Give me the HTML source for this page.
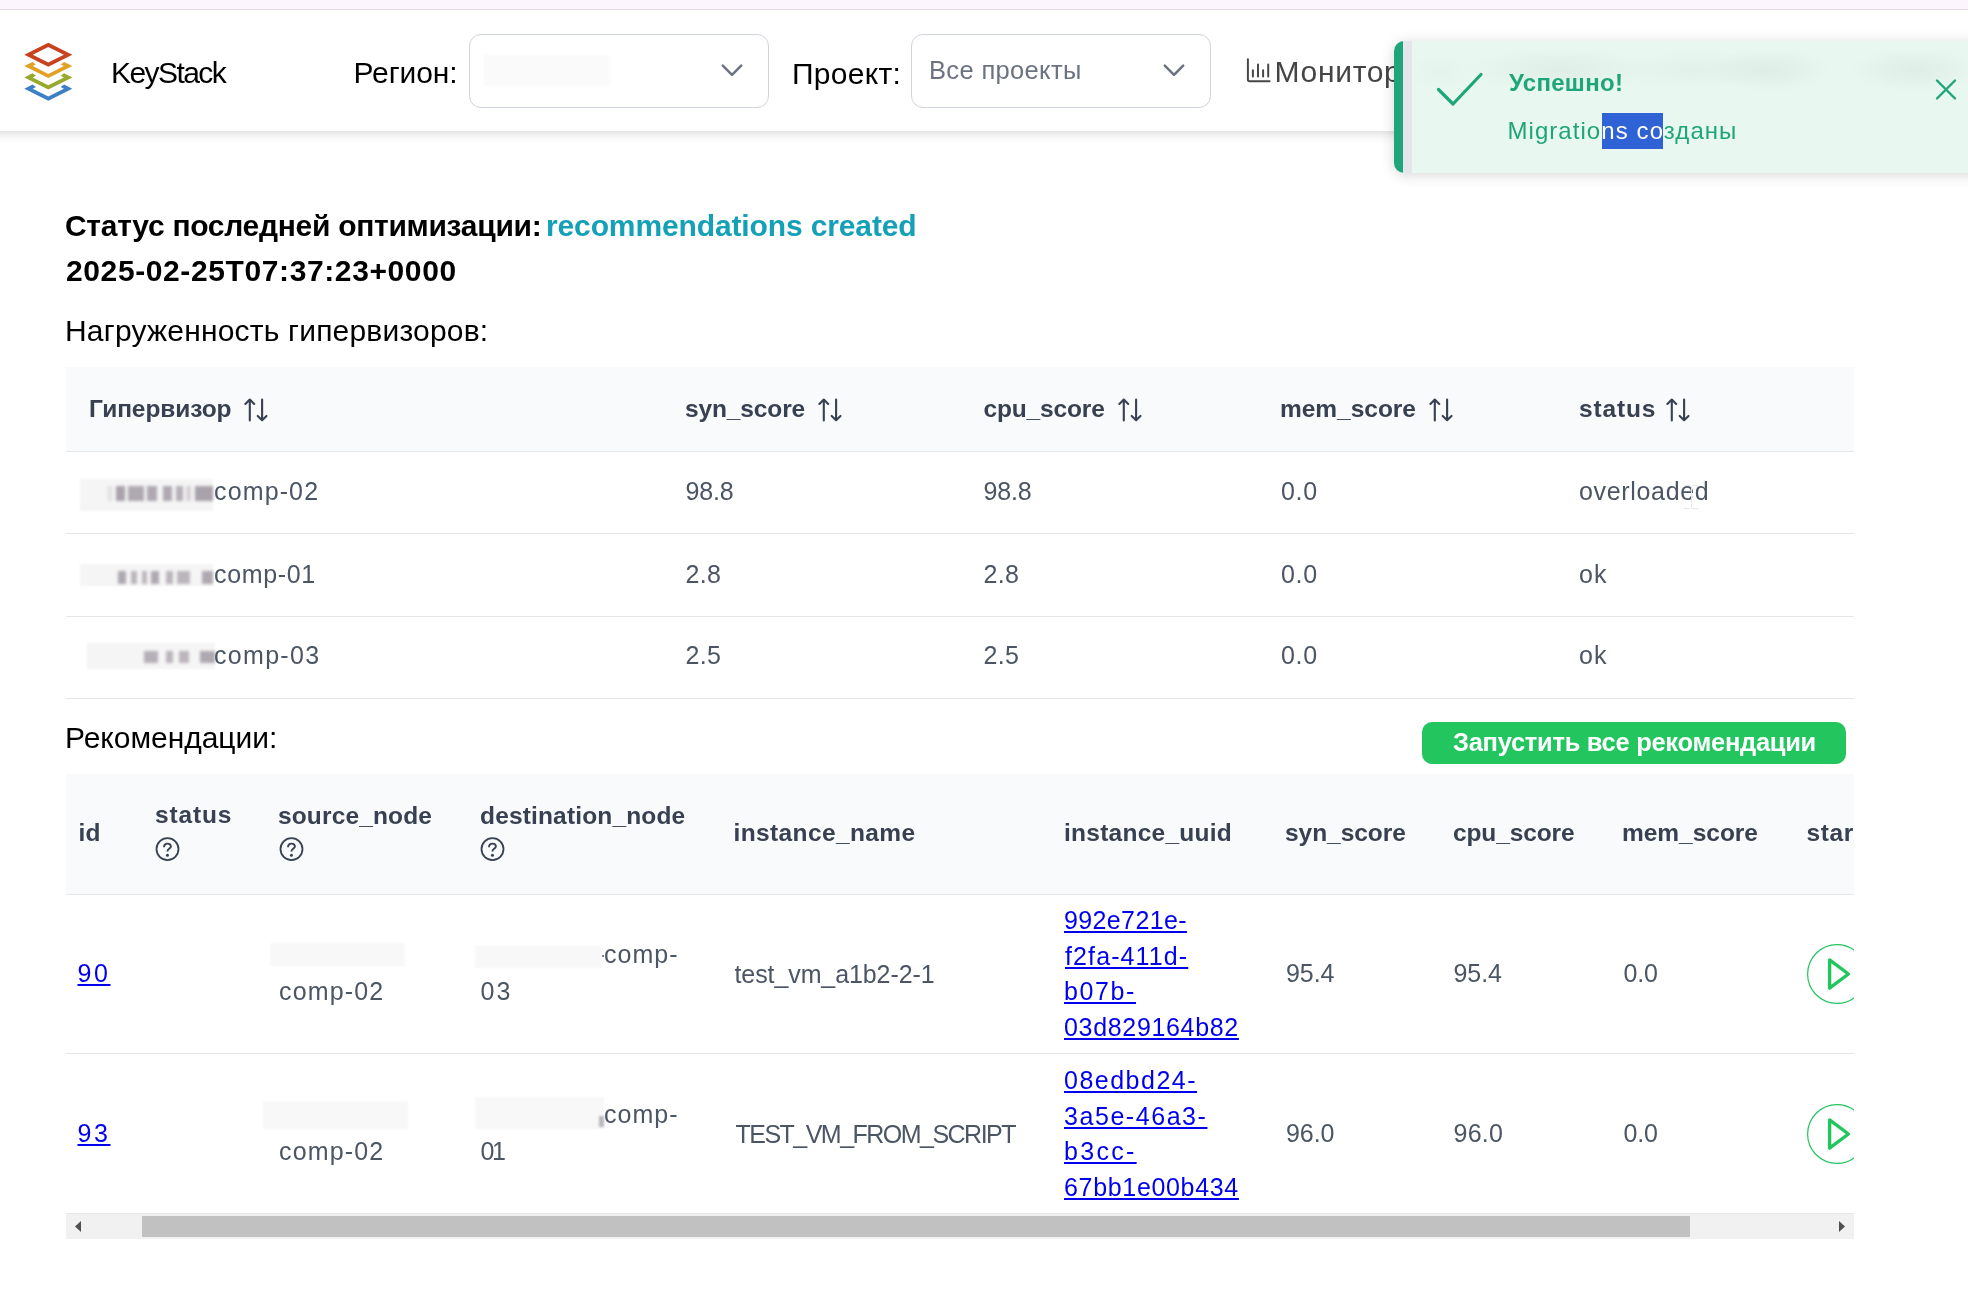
<!DOCTYPE html>
<html><head><meta charset="utf-8"><style>
html,body{margin:0;padding:0;background:#fff;width:1968px;height:1295px;overflow:hidden;}
body{font-family:"Liberation Sans",sans-serif;position:relative;}
.abs{position:absolute;}
.t{position:absolute;white-space:nowrap;line-height:1;}
.u{text-decoration:underline;text-decoration-thickness:2px;text-underline-offset:2.4px;}
.blur{background:#f8f8f8;filter:blur(1px);}
.blur1{background:#f5f5f5;filter:blur(0.8px);}
</style></head><body>
<div class="abs" style="left:0;top:0;width:1968px;height:1295px;overflow:hidden;background:#fff;will-change:transform;">
<div class="abs" style="left:0;top:0;width:1968px;height:9px;background:#fdf5fd;"></div>
<div class="abs" style="left:0;top:9px;width:1968px;height:1px;background:#e3dbe7;"></div>
<div class="abs" style="left:0;top:131px;width:1968px;height:13px;background:linear-gradient(rgba(0,0,0,0.10),rgba(0,0,0,0.05) 35%,rgba(0,0,0,0.015) 70%,rgba(0,0,0,0));"></div>
<svg class="abs" style="left:0;top:0" width="100" height="110" viewBox="0 0 100 110"><path d="M24.30,54.70 48.30,42.70 72.30,54.70 48.30,66.70Z M32.70,54.70 48.30,46.90 63.90,54.70 48.30,62.50Z" fill="#c9411e" fill-rule="evenodd"/><path d="M24.30,66.10 32.50,62.00 35.90,64.50 32.70,66.10 48.30,73.90 63.90,66.10 60.70,64.50 64.10,62.00 72.30,66.10 48.30,78.10Z" fill="#e2a024"/><path d="M24.30,77.40 32.50,73.30 35.90,75.80 32.70,77.40 48.30,85.20 63.90,77.40 60.70,75.80 64.10,73.30 72.30,77.40 48.30,89.40Z" fill="#98a92b"/><path d="M24.30,88.70 32.50,84.60 35.90,87.10 32.70,88.70 48.30,96.50 63.90,88.70 60.70,87.10 64.10,84.60 72.30,88.70 48.30,100.70Z" fill="#3c7fc5"/></svg>
<span id="ks" class="t" style="left:111.0px;top:58.00px;font-size:30px;font-weight:400;color:#000;letter-spacing:-1.571px;">KeyStack</span>
<span id="reg" class="t" style="left:353.5px;top:57.60px;font-size:30px;font-weight:400;color:#000;letter-spacing:-0.100px;">Регион:</span>
<div class="abs" style="left:469px;top:34px;width:298px;height:72px;border:1px solid #cfd4dc;border-radius:12px;background:#fff;"></div>
<div class="abs blur" style="left:484px;top:55px;width:126px;height:31px;background:#fafafa;"></div>
<svg class="abs" style="left:720px;top:62px" width="24" height="18" viewBox="0 0 24 18"><path d="M2.8 3.6 L12 12.8 L21.2 3.6" fill="none" stroke="#6b7280" stroke-width="2.5" stroke-linecap="round" stroke-linejoin="round"/></svg>
<span id="prj" class="t" style="left:792.0px;top:58.50px;font-size:30px;font-weight:400;color:#000;letter-spacing:0.267px;">Проект:</span>
<div class="abs" style="left:911px;top:34px;width:298px;height:72px;border:1px solid #cfd4dc;border-radius:12px;background:#fff;"></div>
<span id="allp" class="t" style="left:929.0px;top:57.53px;font-size:25.5px;font-weight:400;color:#6b7280;letter-spacing:0.340px;">Все проекты</span>
<svg class="abs" style="left:1162px;top:62px" width="24" height="18" viewBox="0 0 24 18"><path d="M2.8 3.6 L12 12.8 L21.2 3.6" fill="none" stroke="#6b7280" stroke-width="2.5" stroke-linecap="round" stroke-linejoin="round"/></svg>
<svg class="abs" style="left:1240px;top:52px" width="40" height="36" viewBox="0 0 40 36" fill="none" stroke="#474747" stroke-width="2" stroke-linecap="round"><path d="M7.9 7.3 V27.6 Q7.9 29.3 9.6 29.3 H29.6" stroke-linejoin="round"/><path d="M12.9 18.3 V24.4 M18 12.5 V24.4 M23.1 18.3 V24.4 M28.2 12.5 V24.4"/></svg>
<span id="mon" class="t" style="left:1274.5px;top:56.60px;font-size:30px;font-weight:400;color:#444444;letter-spacing:0.700px;">Мониторинг</span>
<!-- toast -->
<div class="abs" style="left:1394px;top:41px;width:600px;height:132px;border-radius:10px 0 0 10px;background:#e8f7f0;box-shadow:0 2px 14px rgba(0,0,0,0.16);overflow:hidden;">
  <div class="abs" style="left:0;top:0;width:9px;height:132px;background:#1fa57a;"></div>
  <div class="abs" style="left:9px;top:0;width:9px;height:132px;background:#e4e6ea;"></div>
  <div class="abs" style="left:0;top:0;width:600px;height:132px;background:radial-gradient(ellipse 32px 18px at 46px 31px, rgba(60,100,80,0.025), rgba(60,100,80,0)),radial-gradient(ellipse 95px 22px at 166px 29px, rgba(60,100,80,0.055), rgba(60,100,80,0)),radial-gradient(ellipse 80px 20px at 300px 29px, rgba(60,100,80,0.035), rgba(60,100,80,0)),radial-gradient(ellipse 60px 22px at 376px 29px, rgba(60,100,80,0.06), rgba(60,100,80,0)),radial-gradient(ellipse 65px 22px at 521px 29px, rgba(60,100,80,0.06), rgba(60,100,80,0));"></div>
</div>
<svg class="abs" style="left:1434px;top:70px" width="52" height="40" viewBox="0 0 52 40" fill="none" stroke="#1fa57a" stroke-width="3.2" stroke-linecap="round" stroke-linejoin="round"><path d="M4.5 19.5 L19 34 L47 4.5"/></svg>
<svg class="abs" style="left:1934px;top:78px" width="24" height="23" viewBox="0 0 24 23" fill="none" stroke="#1fa57a" stroke-width="2.4" stroke-linecap="round"><path d="M3 2.5 L21 20.5 M21 2.5 L3 20.5"/></svg>
<span id="ok1" class="t" style="left:1509.0px;top:70.60px;font-size:24px;font-weight:700;color:#1fa57a;letter-spacing:0.314px;">Успешно!</span>
<span id="ok2" class="t" style="left:1507.5px;top:118.80px;font-size:24px;font-weight:400;color:#1fa57a;letter-spacing:1.047px;">Migrations созданы</span>
<div class="abs" style="left:1602px;top:113px;width:61px;height:35.8px;background:#2f62d4;overflow:hidden;"><div class="abs" style="left:-1602px;top:-113px;width:1968px;height:300px;"><span  class="t" style="left:1507.5px;top:118.80px;font-size:24px;font-weight:400;color:#ffffff;letter-spacing:1.047px;">Migrations созданы</span></div></div>
<!-- content -->
<span id="st1" class="t" style="left:65.0px;top:211.30px;font-size:30px;font-weight:700;color:#000;letter-spacing:-0.293px;">Статус последней оптимизации:</span>
<span id="st2" class="t" style="left:546.0px;top:211.30px;font-size:30px;font-weight:700;color:#14a0b6;letter-spacing:-0.127px;">recommendations created</span>
<span id="dt" class="t" style="left:66.0px;top:256.10px;font-size:30px;font-weight:700;color:#000;letter-spacing:0.609px;">2025-02-25T07:37:23+0000</span>
<span id="load" class="t" style="left:65.0px;top:315.80px;font-size:30px;font-weight:400;color:#000;letter-spacing:0.200px;">Нагруженность гипервизоров:</span>
<!-- table1 -->
<div class="abs" style="left:66px;top:367px;width:1788px;height:84px;background:#f9fafb;"></div>
<div class="abs" style="left:66px;top:451px;width:1788px;height:1px;background:#e5e7eb;"></div>
<div class="abs" style="left:66px;top:533px;width:1788px;height:1px;background:#e5e7eb;"></div>
<div class="abs" style="left:66px;top:616px;width:1788px;height:1px;background:#e5e7eb;"></div>
<div class="abs" style="left:66px;top:698px;width:1788px;height:1px;background:#e5e7eb;"></div>
<span id="h1" class="t" style="left:89.0px;top:396.98px;font-size:24.5px;font-weight:700;color:#374151;letter-spacing:-0.089px;">Гипервизор</span><span id="h2" class="t" style="left:685.0px;top:396.98px;font-size:24.5px;font-weight:700;color:#374151;letter-spacing:-0.125px;">syn_score</span><span id="h3" class="t" style="left:983.5px;top:396.98px;font-size:24.5px;font-weight:700;color:#374151;letter-spacing:-0.150px;">cpu_score</span><span id="h4" class="t" style="left:1280.0px;top:396.98px;font-size:24.5px;font-weight:700;color:#374151;letter-spacing:-0.025px;">mem_score</span><span id="h5" class="t" style="left:1579.0px;top:396.98px;font-size:24.5px;font-weight:700;color:#374151;letter-spacing:0.840px;">status</span>
<svg class="abs" style="left:244px;top:398px" width="24" height="24" viewBox="0 0 24 24" fill="none" stroke="#374151" stroke-width="2.1" stroke-linecap="round" stroke-linejoin="round"><path d="M5.8 22.4V1.5 M1.4 5.9 L5.8 1.5 L10.2 5.9"/><path d="M18.1 1.5V22.3 M13.7 17.9 L18.1 22.3 L22.5 17.9"/></svg><svg class="abs" style="left:817.5px;top:398px" width="24" height="24" viewBox="0 0 24 24" fill="none" stroke="#374151" stroke-width="2.1" stroke-linecap="round" stroke-linejoin="round"><path d="M5.8 22.4V1.5 M1.4 5.9 L5.8 1.5 L10.2 5.9"/><path d="M18.1 1.5V22.3 M13.7 17.9 L18.1 22.3 L22.5 17.9"/></svg><svg class="abs" style="left:1117.5px;top:398px" width="24" height="24" viewBox="0 0 24 24" fill="none" stroke="#374151" stroke-width="2.1" stroke-linecap="round" stroke-linejoin="round"><path d="M5.8 22.4V1.5 M1.4 5.9 L5.8 1.5 L10.2 5.9"/><path d="M18.1 1.5V22.3 M13.7 17.9 L18.1 22.3 L22.5 17.9"/></svg><svg class="abs" style="left:1428.5px;top:398px" width="24" height="24" viewBox="0 0 24 24" fill="none" stroke="#374151" stroke-width="2.1" stroke-linecap="round" stroke-linejoin="round"><path d="M5.8 22.4V1.5 M1.4 5.9 L5.8 1.5 L10.2 5.9"/><path d="M18.1 1.5V22.3 M13.7 17.9 L18.1 22.3 L22.5 17.9"/></svg><svg class="abs" style="left:1666px;top:398px" width="24" height="24" viewBox="0 0 24 24" fill="none" stroke="#374151" stroke-width="2.1" stroke-linecap="round" stroke-linejoin="round"><path d="M5.8 22.4V1.5 M1.4 5.9 L5.8 1.5 L10.2 5.9"/><path d="M18.1 1.5V22.3 M13.7 17.9 L18.1 22.3 L22.5 17.9"/></svg>
<div class="abs blur1" style="left:80px;top:479px;width:133px;height:32px;"></div><div class="abs blur1" style="left:80px;top:564px;width:133px;height:22px;"></div><div class="abs blur1" style="left:87px;top:643px;width:128px;height:26px;"></div>
<div class="abs" style="left:108px;top:486px;width:4px;height:15px;background:rgba(85,72,90,0.120);filter:blur(1.8px);"></div><div class="abs" style="left:116px;top:486px;width:8.5px;height:15px;background:rgba(85,72,90,0.480);filter:blur(1.8px);"></div><div class="abs" style="left:128.4px;top:486px;width:15.199999999999989px;height:15px;background:rgba(85,72,90,0.440);filter:blur(1.8px);"></div><div class="abs" style="left:147.4px;top:486px;width:9.900000000000006px;height:15px;background:rgba(85,72,90,0.440);filter:blur(1.8px);"></div><div class="abs" style="left:163.4px;top:486px;width:8.400000000000006px;height:15px;background:rgba(85,72,90,0.440);filter:blur(1.8px);"></div><div class="abs" style="left:176.4px;top:486px;width:6.799999999999983px;height:15px;background:rgba(85,72,90,0.400);filter:blur(1.8px);"></div><div class="abs" style="left:186.3px;top:486px;width:4.599999999999994px;height:15px;background:rgba(85,72,90,0.200);filter:blur(1.8px);"></div><div class="abs" style="left:195.4px;top:486px;width:17.599999999999994px;height:15px;background:rgba(85,72,90,0.480);filter:blur(1.8px);"></div>
<div class="abs" style="left:117.7px;top:571px;width:8.0px;height:13px;background:rgba(85,72,90,0.440);filter:blur(1.8px);"></div><div class="abs" style="left:131.2px;top:571px;width:6.0px;height:13px;background:rgba(85,72,90,0.360);filter:blur(1.8px);"></div><div class="abs" style="left:142.3px;top:571px;width:5.0px;height:13px;background:rgba(85,72,90,0.360);filter:blur(1.8px);"></div><div class="abs" style="left:151.3px;top:571px;width:8.0px;height:13px;background:rgba(85,72,90,0.440);filter:blur(1.8px);"></div><div class="abs" style="left:165.9px;top:571px;width:7.0px;height:13px;background:rgba(85,72,90,0.360);filter:blur(1.8px);"></div><div class="abs" style="left:177.4px;top:571px;width:13.099999999999994px;height:13px;background:rgba(85,72,90,0.360);filter:blur(1.8px);"></div><div class="abs" style="left:201.5px;top:571px;width:11.5px;height:13px;background:rgba(85,72,90,0.440);filter:blur(1.8px);"></div>
<div class="abs" style="left:144.3px;top:651.4px;width:14.0px;height:12.0px;background:rgba(85,72,90,0.400);filter:blur(1.8px);"></div><div class="abs" style="left:165.9px;top:651.4px;width:7.0px;height:12.0px;background:rgba(85,72,90,0.360);filter:blur(1.8px);"></div><div class="abs" style="left:179.4px;top:651.4px;width:10.099999999999994px;height:12.0px;background:rgba(85,72,90,0.360);filter:blur(1.8px);"></div><div class="abs" style="left:199.5px;top:651.4px;width:15.5px;height:12.0px;background:rgba(85,72,90,0.440);filter:blur(1.8px);"></div>
<span id="r0c" class="t" style="left:214.0px;top:478.95px;font-size:25px;font-weight:400;color:#4b5563;letter-spacing:1.133px;">comp-02</span><span id="r0v" class="t" style="left:685.5px;top:478.95px;font-size:25px;font-weight:400;color:#4b5563;letter-spacing:-0.133px;">98.8</span><span id="r0v2" class="t" style="left:983.5px;top:478.95px;font-size:25px;font-weight:400;color:#4b5563;letter-spacing:-0.133px;">98.8</span><span id="r0v3" class="t" style="left:1281.0px;top:478.95px;font-size:25px;font-weight:400;color:#4b5563;letter-spacing:0.700px;">0.0</span><span id="r0s" class="t" style="left:1579.0px;top:478.95px;font-size:25px;font-weight:400;color:#4b5563;letter-spacing:0.667px;">overloaded</span><span id="r1c" class="t" style="left:214.0px;top:561.75px;font-size:25px;font-weight:400;color:#4b5563;letter-spacing:0.667px;">comp-01</span><span id="r1v" class="t" style="left:685.5px;top:561.75px;font-size:25px;font-weight:400;color:#4b5563;letter-spacing:0.300px;">2.8</span><span id="r1v2" class="t" style="left:983.5px;top:561.75px;font-size:25px;font-weight:400;color:#4b5563;letter-spacing:0.300px;">2.8</span><span id="r1v3" class="t" style="left:1281.0px;top:561.75px;font-size:25px;font-weight:400;color:#4b5563;letter-spacing:0.700px;">0.0</span><span id="r1s" class="t" style="left:1579.0px;top:561.75px;font-size:25px;font-weight:400;color:#4b5563;letter-spacing:1.000px;">ok</span><span id="r2c" class="t" style="left:214.0px;top:643.25px;font-size:25px;font-weight:400;color:#4b5563;letter-spacing:1.300px;">comp-03</span><span id="r2v" class="t" style="left:685.5px;top:643.25px;font-size:25px;font-weight:400;color:#4b5563;letter-spacing:0.300px;">2.5</span><span id="r2v2" class="t" style="left:983.5px;top:643.25px;font-size:25px;font-weight:400;color:#4b5563;letter-spacing:0.300px;">2.5</span><span id="r2v3" class="t" style="left:1281.0px;top:643.25px;font-size:25px;font-weight:400;color:#4b5563;letter-spacing:0.700px;">0.0</span><span id="r2s" class="t" style="left:1579.0px;top:643.25px;font-size:25px;font-weight:400;color:#4b5563;letter-spacing:1.000px;">ok</span>
<div class="abs" style="left:1690.5px;top:486px;width:1.2px;height:22px;background:#e6e9ea;"></div>
<div class="abs" style="left:1684px;top:485px;width:6px;height:1.2px;background:#e6e9ea;"></div><div class="abs" style="left:1692px;top:485px;width:6px;height:1.2px;background:#e6e9ea;"></div>
<div class="abs" style="left:1684px;top:508px;width:6px;height:1.2px;background:#e6e9ea;"></div><div class="abs" style="left:1692px;top:508px;width:6px;height:1.2px;background:#e6e9ea;"></div>
<!-- recommendations -->
<div class="abs" style="left:1422px;top:722px;width:424px;height:42px;border-radius:10px;background:#22c55e;"></div>
<span id="btn" class="t" style="left:1453.0px;top:730.43px;font-size:25.5px;font-weight:700;color:#ffffff;letter-spacing:-0.288px;">Запустить все рекомендации</span>
<span id="rec" class="t" style="left:65.0px;top:723.20px;font-size:30px;font-weight:400;color:#000;letter-spacing:-0.033px;">Рекомендации:</span>
<div class="abs" style="left:66px;top:774px;width:1788px;height:120px;background:#f9fafb;"></div>
<div class="abs" style="left:66px;top:894px;width:1788px;height:1px;background:#e5e7eb;"></div>
<div class="abs" style="left:66px;top:1053px;width:1788px;height:1px;background:#e5e7eb;"></div>
<div class="abs" style="left:66px;top:1213px;width:1788px;height:1px;background:#e5e7eb;"></div>
<div class="abs" style="left:66px;top:774px;width:1788px;height:465px;overflow:hidden;">
<div class="abs" style="left:-66px;top:-774px;width:1968px;height:1295px;">
<span id="g1" class="t" style="left:78.5px;top:820.97px;font-size:24.5px;font-weight:700;color:#374151;letter-spacing:0.200px;">id</span><span id="g2" class="t" style="left:155.0px;top:803.47px;font-size:24.5px;font-weight:700;color:#374151;letter-spacing:0.840px;">status</span><span id="g3" class="t" style="left:278.0px;top:803.67px;font-size:24.5px;font-weight:700;color:#374151;letter-spacing:0.140px;">source_node</span><span id="g4" class="t" style="left:480.0px;top:803.67px;font-size:24.5px;font-weight:700;color:#374151;letter-spacing:0.160px;">destination_node</span><span id="g5" class="t" style="left:733.5px;top:821.27px;font-size:24.5px;font-weight:700;color:#374151;letter-spacing:0.383px;">instance_name</span><span id="g6" class="t" style="left:1064.0px;top:821.27px;font-size:24.5px;font-weight:700;color:#374151;letter-spacing:0.250px;">instance_uuid</span><span id="g7" class="t" style="left:1285.0px;top:821.27px;font-size:24.5px;font-weight:700;color:#374151;letter-spacing:-0.050px;">syn_score</span><span id="g8" class="t" style="left:1453.0px;top:821.27px;font-size:24.5px;font-weight:700;color:#374151;letter-spacing:-0.125px;">cpu_score</span><span id="g9" class="t" style="left:1622.0px;top:821.27px;font-size:24.5px;font-weight:700;color:#374151;letter-spacing:-0.025px;">mem_score</span><span id="g10" class="t" style="left:1806.5px;top:821.27px;font-size:24.5px;font-weight:700;color:#374151;letter-spacing:0.600px;">start</span>
<svg class="abs" style="left:155.0px;top:837.2px" width="25" height="25" viewBox="0 0 25 25" fill="none" stroke="#374151" stroke-width="1.8"><circle cx="12.5" cy="12.1" r="11"/><path d="M9 10.3 C9 7.8 10.5 6.6 12.45 6.6 C14.4 6.6 15.9 7.8 15.9 9.6 C15.9 11.6 12.5 12 12.5 14 V14.6" stroke-width="1.9"/><circle cx="12.45" cy="18.2" r="1.5" fill="#374151" stroke="none"/></svg><svg class="abs" style="left:278.5px;top:837.2px" width="25" height="25" viewBox="0 0 25 25" fill="none" stroke="#374151" stroke-width="1.8"><circle cx="12.5" cy="12.1" r="11"/><path d="M9 10.3 C9 7.8 10.5 6.6 12.45 6.6 C14.4 6.6 15.9 7.8 15.9 9.6 C15.9 11.6 12.5 12 12.5 14 V14.6" stroke-width="1.9"/><circle cx="12.45" cy="18.2" r="1.5" fill="#374151" stroke="none"/></svg><svg class="abs" style="left:479.5px;top:837.2px" width="25" height="25" viewBox="0 0 25 25" fill="none" stroke="#374151" stroke-width="1.8"><circle cx="12.5" cy="12.1" r="11"/><path d="M9 10.3 C9 7.8 10.5 6.6 12.45 6.6 C14.4 6.6 15.9 7.8 15.9 9.6 C15.9 11.6 12.5 12 12.5 14 V14.6" stroke-width="1.9"/><circle cx="12.45" cy="18.2" r="1.5" fill="#374151" stroke="none"/></svg>
<div class="abs blur" style="left:270px;top:943px;width:135px;height:23px;"></div><div class="abs blur" style="left:475px;top:946px;width:127px;height:22px;"></div>
<div class="abs blur" style="left:263px;top:1101px;width:145px;height:28px;"></div><div class="abs blur" style="left:475px;top:1097px;width:129px;height:32px;"></div>
<span id="q1id" class="t u" style="left:77.5px;top:961.45px;font-size:25px;font-weight:400;color:#0000ee;letter-spacing:2.600px;">90</span><span id="q1src" class="t" style="left:279.0px;top:979.25px;font-size:25px;font-weight:400;color:#4b5563;letter-spacing:1.167px;">comp-02</span><span id="q1d1" class="t" style="left:604.0px;top:942.25px;font-size:25px;font-weight:400;color:#4b5563;letter-spacing:1.000px;">comp-</span><span id="q1d2" class="t" style="left:480.5px;top:979.25px;font-size:25px;font-weight:400;color:#4b5563;letter-spacing:2.000px;">03</span><span id="q1n" class="t" style="left:734.5px;top:961.55px;font-size:25px;font-weight:400;color:#4b5563;letter-spacing:-0.093px;">test_vm_a1b2-2-1</span><span id="q1u0" class="t u" style="left:1064.0px;top:908.25px;font-size:25px;font-weight:400;color:#0000ee;letter-spacing:0.375px;">992e721e-</span><span id="q1u1" class="t u" style="left:1065.0px;top:943.85px;font-size:25px;font-weight:400;color:#0000ee;letter-spacing:1.111px;">f2fa-411d-</span><span id="q1u2" class="t u" style="left:1064.0px;top:979.45px;font-size:25px;font-weight:400;color:#0000ee;letter-spacing:1.600px;">b07b-</span><span id="q1u3" class="t u" style="left:1064.0px;top:1015.05px;font-size:25px;font-weight:400;color:#0000ee;letter-spacing:0.673px;">03d829164b82</span><span id="q1s" class="t" style="left:1286.0px;top:961.05px;font-size:25px;font-weight:400;color:#4b5563;letter-spacing:-0.067px;">95.4</span><span id="q1c" class="t" style="left:1453.5px;top:961.05px;font-size:25px;font-weight:400;color:#4b5563;letter-spacing:-0.067px;">95.4</span><span id="q1m" class="t" style="left:1623.5px;top:961.05px;font-size:25px;font-weight:400;color:#4b5563;letter-spacing:-0.200px;">0.0</span><span id="q2id" class="t u" style="left:77.5px;top:1121.45px;font-size:25px;font-weight:400;color:#0000ee;letter-spacing:2.600px;">93</span><span id="q2src" class="t" style="left:279.0px;top:1139.25px;font-size:25px;font-weight:400;color:#4b5563;letter-spacing:1.167px;">comp-02</span><span id="q2d1" class="t" style="left:604.0px;top:1102.25px;font-size:25px;font-weight:400;color:#4b5563;letter-spacing:1.000px;">comp-</span><span id="q2d2" class="t" style="left:480.5px;top:1139.25px;font-size:25px;font-weight:400;color:#4b5563;letter-spacing:-2.400px;">01</span><span id="q2n" class="t" style="left:735.5px;top:1121.55px;font-size:25px;font-weight:400;color:#4b5563;letter-spacing:-1.522px;">TEST_VM_FROM_SCRIPT</span><span id="q2u0" class="t u" style="left:1064.0px;top:1068.25px;font-size:25px;font-weight:400;color:#0000ee;letter-spacing:1.500px;">08edbd24-</span><span id="q2u1" class="t u" style="left:1064.0px;top:1103.65px;font-size:25px;font-weight:400;color:#0000ee;letter-spacing:1.556px;">3a5e-46a3-</span><span id="q2u2" class="t u" style="left:1064.0px;top:1139.05px;font-size:25px;font-weight:400;color:#0000ee;letter-spacing:2.300px;">b3cc-</span><span id="q2u3" class="t u" style="left:1064.0px;top:1175.05px;font-size:25px;font-weight:400;color:#0000ee;letter-spacing:0.673px;">67bb1e00b434</span><span id="q2s" class="t" style="left:1286.0px;top:1121.05px;font-size:25px;font-weight:400;color:#4b5563;letter-spacing:-0.067px;">96.0</span><span id="q2c" class="t" style="left:1453.5px;top:1121.05px;font-size:25px;font-weight:400;color:#4b5563;letter-spacing:0.267px;">96.0</span><span id="q2m" class="t" style="left:1623.5px;top:1121.05px;font-size:25px;font-weight:400;color:#4b5563;letter-spacing:-0.200px;">0.0</span>
<svg class="abs" style="left:1806px;top:943px" width="62" height="62" viewBox="0 0 62 62" fill="none"><circle cx="31" cy="31" r="29.4" stroke="#22c55e" stroke-width="1.2"/><path d="M23.6 16.9 L42.4 31 L23.6 45.1 Z" stroke="#22c55e" stroke-width="3.4" stroke-linejoin="round"/></svg><svg class="abs" style="left:1806px;top:1102.8px" width="62" height="62" viewBox="0 0 62 62" fill="none"><circle cx="31" cy="31" r="29.4" stroke="#22c55e" stroke-width="1.2"/><path d="M23.6 16.9 L42.4 31 L23.6 45.1 Z" stroke="#22c55e" stroke-width="3.4" stroke-linejoin="round"/></svg>
<div class="abs" style="left:601.5px;top:955.3px;width:2.2px;height:2.2px;border-radius:50%;background:#4b5563;"></div>
<div class="abs" style="left:599px;top:1116px;width:5px;height:11px;background:rgba(70,70,80,0.35);filter:blur(1px);"></div>
</div></div>
<!-- scrollbar -->
<div class="abs" style="left:66px;top:1214px;width:1788px;height:25px;background:#f1f1f1;"></div>
<div class="abs" style="left:142px;top:1216px;width:1548px;height:21px;background:#c1c1c1;"></div>
<svg class="abs" style="left:70px;top:1218px" width="16" height="18" viewBox="0 0 16 18"><path d="M5 8.5 L11 3 L11 14 Z" fill="#505050"/></svg>
<svg class="abs" style="left:1834px;top:1218px" width="16" height="18" viewBox="0 0 16 18"><path d="M5 3 L11 8.5 L5 14 Z" fill="#505050"/></svg>
</div></body></html>
